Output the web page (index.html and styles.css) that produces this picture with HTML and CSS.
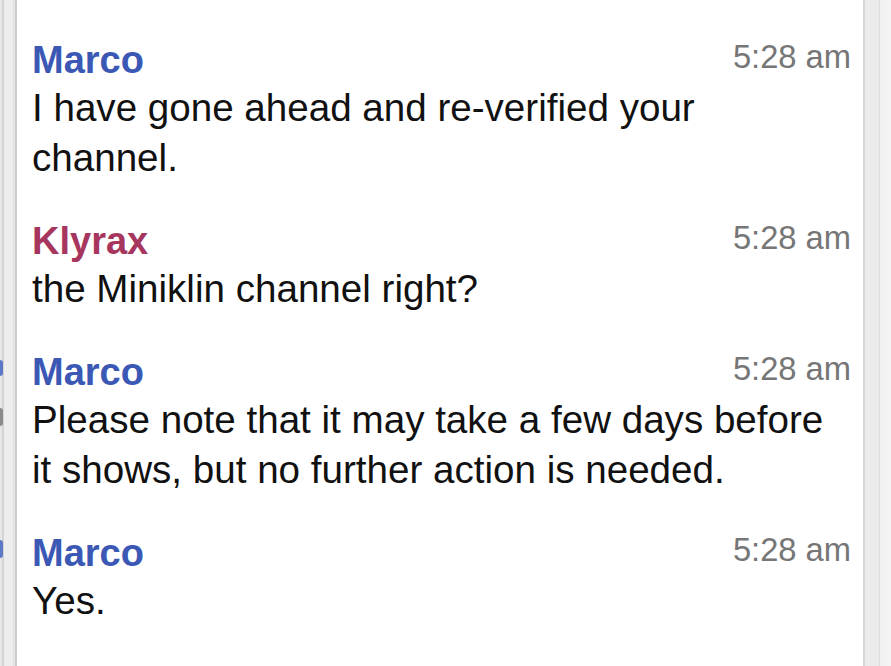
FILE: index.html
```html
<!DOCTYPE html>
<html>
<head>
<meta charset="utf-8">
<link rel="stylesheet" href="styles.css">
</head>
<body>
<div class="screen">
  <div class="gutter-left">
    <span class="peek peek-blue p1"></span>
    <span class="peek peek-gray p2"></span>
    <span class="peek peek-blue p3"></span>
  </div>
  <div class="panel">
    <div class="msg">
      <div class="head"><span class="name marco">Marco</span><span class="time">5:28 am</span></div>
      <div class="text">I have gone ahead and re-verified your channel.</div>
    </div>
    <div class="msg">
      <div class="head"><span class="name klyrax">Klyrax</span><span class="time">5:28 am</span></div>
      <div class="text">the Miniklin channel right?</div>
    </div>
    <div class="msg">
      <div class="head"><span class="name marco">Marco</span><span class="time">5:28 am</span></div>
      <div class="text">Please note that it may take a few days before it shows, but no further action is needed.</div>
    </div>
    <div class="msg">
      <div class="head"><span class="name marco">Marco</span><span class="time">5:28 am</span></div>
      <div class="text">Yes.</div>
    </div>
  </div>
  <div class="gutter-right"></div>
</div>
</body>
</html>
```
FILE: styles.css
```css
html, body {
  margin: 0;
  padding: 0;
  background: #ffffff;
}
.screen {
  display: flex;
  width: 891px;
  height: 666px;
  overflow: hidden;
  font-family: "Liberation Sans", Arial, sans-serif;
}
.gutter-left {
  position: relative;
  width: 15px;
  flex: none;
  background: linear-gradient(to right, #e6e6e6 0, #e6e6e6 2px, #d4d4d4 2px, #d4d4d4 4px, #ededed 4px, #ededed 13px, #e2e2e2 13px);
  border-right: 2px solid #cdcdcd;
}
.peek {
  position: absolute;
  left: 0;
  width: 3px;
  border-radius: 0 3px 3px 0;
}
.peek-blue { background: #5b79c6; }
.peek-gray { background: #8a8a8a; }
.p1 { top: 360px; height: 16px; }
.p2 { top: 408px; height: 18px; }
.p3 { top: 540px; height: 18px; }
.panel {
  flex: 1;
  background: #ffffff;
  padding: 37px 12px 0 15px;
  display: flex;
  flex-direction: column;
  gap: 35px;
}
.head {
  display: flex;
  justify-content: space-between;
  align-items: flex-start;
  line-height: 46px;
}
.name {
  font-weight: bold;
  font-size: 38px;
}
.marco { color: #3a58b4; }
.klyrax { color: #a7365f; }
.time {
  font-size: 32.7px;
  line-height: 40px;
  color: #767676;
}
.text {
  font-size: 38.6px;
  line-height: 50px;
  color: #111111;
}
.gutter-right {
  width: 28px;
  flex: none;
  background: linear-gradient(to right, #d6d6d6 0, #d6d6d6 2px, #ebebeb 2px, #ebebeb 16px, #dedede 16px, #dedede 17px, #f1f1f1 17px, #f4f4f4 28px);
}
```
